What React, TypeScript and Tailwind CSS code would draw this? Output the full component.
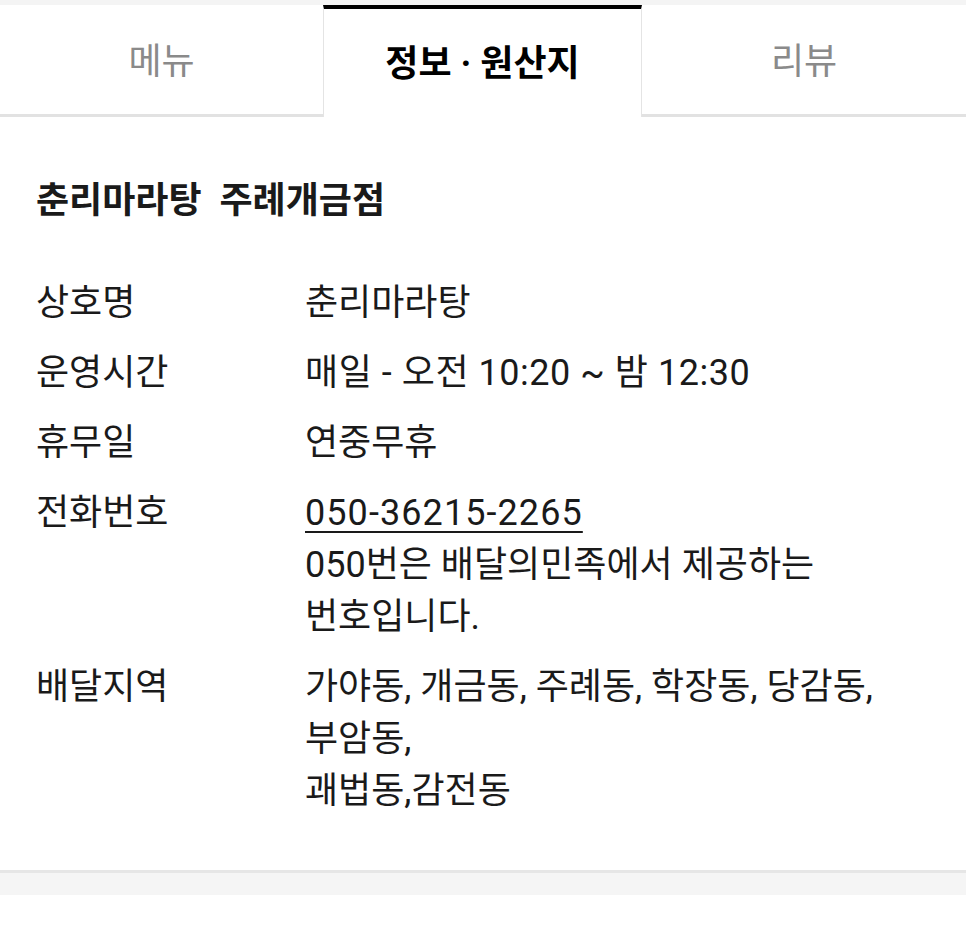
import React from "react";

const rows: { label: string; lines: React.ReactNode[] }[] = [
  { label: "상호명", lines: ["춘리마라탕"] },
  { label: "운영시간", lines: [<span key="t" className="tracking-[0.015em]">매일 - 오전 10:20 ~ 밤 12:30</span>] },
  { label: "휴무일", lines: ["연중무휴"] },
  {
    label: "전화번호",
    lines: [
      <span key="p" className="underline underline-offset-[6px] decoration-[2px] tracking-[0.03em]">050-36215-2265</span>,
      "050번은 배달의민족에서 제공하는",
      "번호입니다.",
    ],
  },
  {
    label: "배달지역",
    lines: ["가야동, 개금동, 주례동, 학장동, 당감동,", "부암동,", "괘법동,감전동"],
  },
];

export default function App() {
  return (
    <div
      className="w-[966px] h-[928px] bg-white text-[#1a1a1a] overflow-hidden"
      style={{ fontFamily: 'Roboto, "Noto Sans CJK KR", sans-serif' }}
    >
      <div className="h-[5px] bg-[#f4f4f4]" />
      <div className="flex h-[112px]">
        <div className="w-[323px] flex items-center justify-center pt-[4px] border-b-[3px] border-[#e2e2e2] text-[36px] text-[#8a8a8a]">
          메뉴
        </div>
        <div className="w-[319px] flex items-center justify-center pt-[2px] border-t-[4px] border-t-black border-x border-x-[#e4e4e4] text-[36px] font-bold text-black">
          정보 · 원산지
        </div>
        <div className="flex-1 flex items-center justify-center pt-[4px] border-b-[3px] border-[#e2e2e2] text-[36px] text-[#8a8a8a]">
          리뷰
        </div>
      </div>
      <div className="px-[36px] pt-[60px]">
        <div className="text-[36px] font-bold leading-[48px] whitespace-pre">춘리마라탕  주례개금점</div>
        <div className="mt-[52px] flex flex-col gap-[18px]">
          {rows.map((r) => (
            <div key={r.label} className="flex text-[36px] leading-[52px]">
              <div className="w-[269px] shrink-0">{r.label}</div>
              <div className="flex flex-col">
                {r.lines.map((l, i) => (
                  <div key={i}>{l}</div>
                ))}
              </div>
            </div>
          ))}
        </div>
      </div>
      <div className="mt-[53px] h-[25px] bg-[#f5f5f5] border-t-[3px] border-[#e6e6e6]" />
    </div>
  );
}
